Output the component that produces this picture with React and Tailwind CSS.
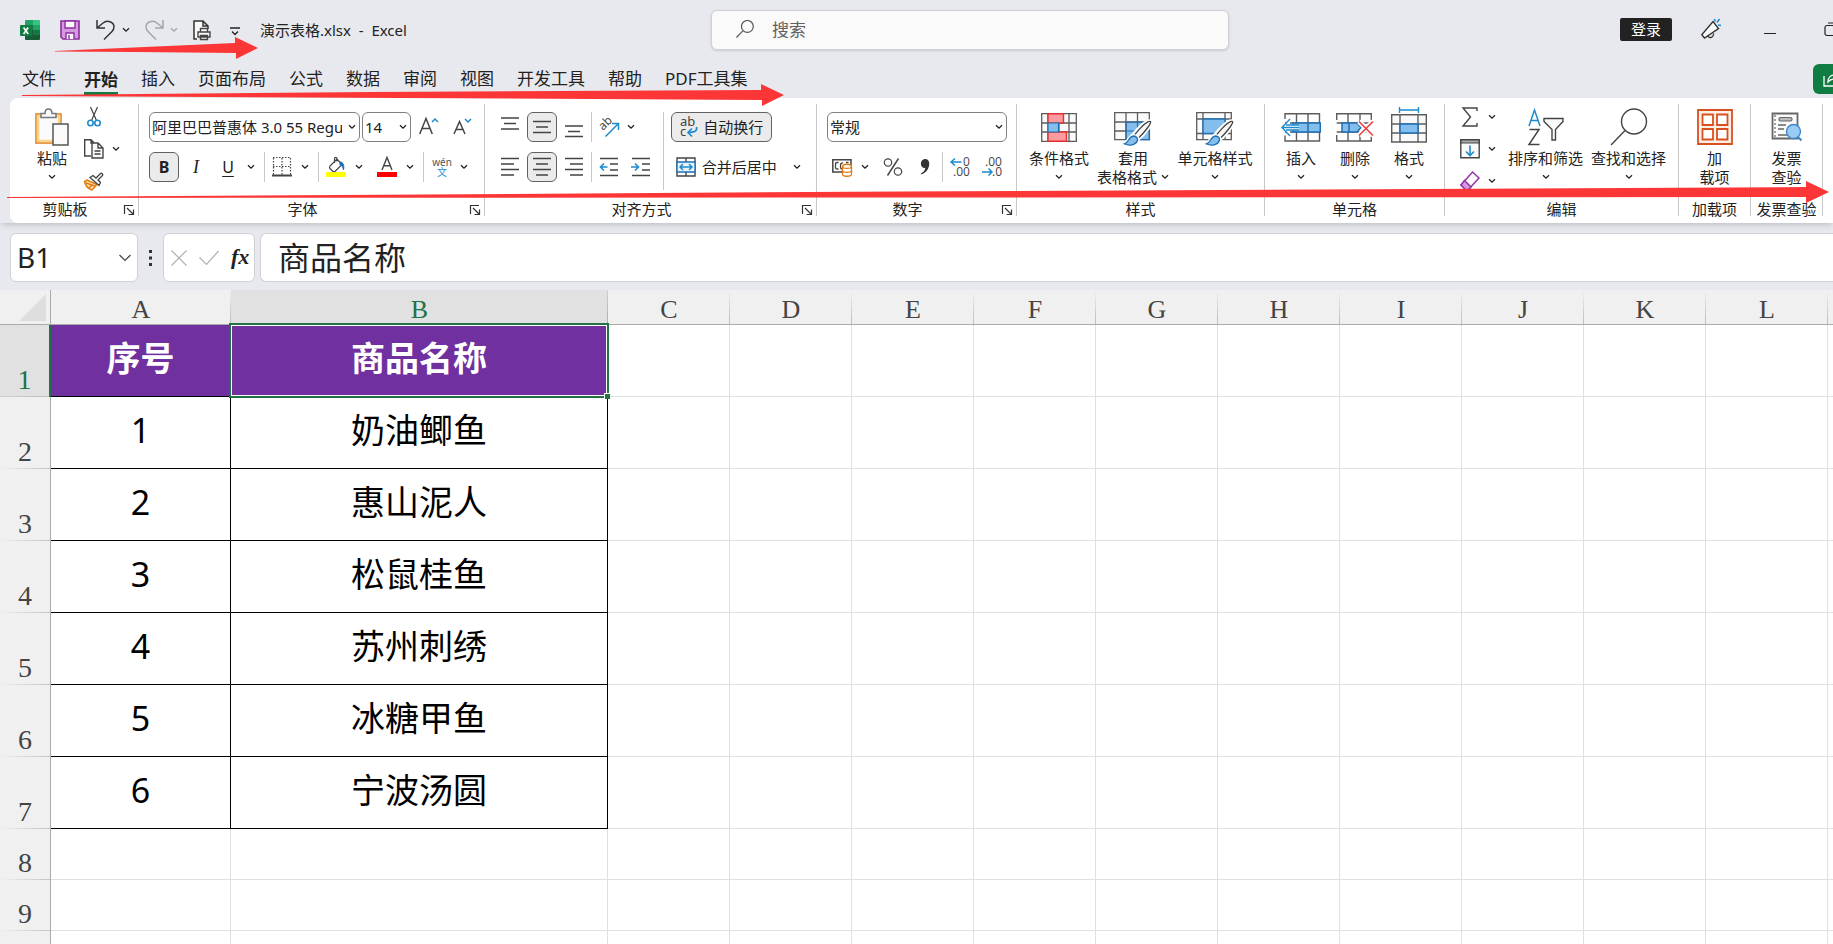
import React from 'react';
import { clsx } from 'clsx';

const tabs = ['插入', '页面布局', '公式', '数据', '审阅', '视图', '开发工具', '帮助', 'PDF工具集'];

const columns = ['C', 'D', 'E', 'F', 'G', 'H', 'I', 'J', 'K', 'L', 'M'];

const products = ['奶油鲫鱼', '惠山泥人', '松鼠桂鱼', '苏州刺绣', '冰糖甲鱼', '宁波汤圆'];

const emptyRows = [8, 9, 10];

/* ---------- icons ---------- */

const Icon = ({ w, h, children, className }) => (
  <svg
    width={w}
    height={h}
    viewBox={`0 0 ${w} ${h}`}
    fill="none"
    stroke="#444"
    strokeWidth="1.2"
    className={clsx('shrink-0 overflow-visible', className)}
    aria-hidden="true"
  >
    {children}
  </svg>
);

const ChevronIcon = ({ color = '#222' }) => (
  <Icon w={8} h={6}>
    <path d="M1 1.2l3 3 3-3" stroke={color} strokeWidth="1.3" />
  </Icon>
);

const ExcelLogo = () => (
  <Icon w={20} h={20}>
    <g stroke="none">
      <path d="M6 0h7v5H5V1a1 1 0 0 1 1-1z" fill="#21a366" />
      <path d="M13 0h6a1 1 0 0 1 1 1v4h-7z" fill="#33c481" />
      <path d="M5 5h8v5H5z" fill="#107c41" />
      <path d="M13 5h7v5h-7z" fill="#21a366" />
      <path d="M5 10h8v5H5z" fill="#185c37" />
      <path d="M13 10h7v5h-7z" fill="#107c41" />
      <path d="M5 15h15v4a1 1 0 0 1-1 1H6a1 1 0 0 1-1-1z" fill="#185c37" />
      <rect x="0" y="5" width="12" height="11" rx="1" fill="#107c41" />
    </g>
    <path d="M3.6 7.5l4.6 6.4M8.2 7.5l-4.6 6.4" stroke="#fff" strokeWidth="1.7" />
  </Icon>
);

const SaveIcon = () => (
  <Icon w={20} h={20}>
    <path d="M1 1h18v18H3l-2-2z" fill="#d59be0" stroke="#8e2b9e" strokeWidth="1.6" />
    <path d="M5 1h10v7H5z" fill="#fafafa" stroke="#8e2b9e" strokeWidth="1.4" />
    <path d="M6 19v-6h8v6" fill="#fafafa" stroke="#8e2b9e" strokeWidth="1.4" />
    <path d="M9 15v4" stroke="#8e2b9e" strokeWidth="1.4" />
  </Icon>
);

const UndoIcon = () => (
  <Icon w={20} h={20}>
    <path d="M1 0v8h8M1 8l6-5c4-3.5 11-1 11 4 0 3-1.500 4-3 5.500L8 19.500" stroke="#333" strokeWidth="1.5" />
  </Icon>
);

const RedoIcon = () => (
  <Icon w={20} h={20}>
    <path d="M19 0v8h-8M19 8l-6-5C9 -.5 2 2 2 7c0 3 1.500 4 3 5.500l7 7" stroke="#a3a5a9" strokeWidth="1.5" />
  </Icon>
);

const PrintPreviewIcon = () => (
  <Icon w={20} h={20}>
    <path d="M5 19H2V1h9l5 5v3M11 1v5h5" fill="#fafafa" stroke="#333" strokeWidth="1.5" />
    <path d="M6 12h12v5H6zM8.500 12V8.500h7V12M8.500 15.500h7v4h-7z" fill="#fafafa" stroke="#444" strokeWidth="1.4" />
  </Icon>
);

const PasteIcon = () => (
  <Icon w={34} h={38}>
    <path d="M1 6h25v29H1z" fill="#fafafa" stroke="#e07b10" strokeWidth="1.5" />
    <path d="M3 8h21v25H3z" stroke="#fbd38b" strokeWidth="2.5" />
    <path d="M6 9.500V5.500h4C10 -.5 17 -.5 17 5.500h4v4z" fill="#fafafa" stroke="#777" strokeWidth="1.5" />
    <path d="M18 16h15v21H18z" fill="#fafafa" stroke="#555" strokeWidth="1.5" />
  </Icon>
);

const CutIcon = () => (
  <Icon w={20} h={20}>
    <path d="M6.500 0l6 13.500M13.500 0l-6 13.500" />
    <circle cx="6.500" cy="16" r="2.700" stroke="#1e8bcd" strokeWidth="1.600" />
    <circle cx="13.500" cy="16" r="2.700" stroke="#1e8bcd" strokeWidth="1.600" />
  </Icon>
);

const CopyIcon = () => (
  <Icon w={20} h={20}>
    <path d="M7 17H.7V.7H7l3 3M7 1v3h3" strokeWidth="1.400" />
    <path d="M8 4h6l5 5v10H8zM14 4v5h5M10.500 12h6M10.500 15h6" fill="#fafafa" strokeWidth="1.400" />
  </Icon>
);

const PainterIcon = () => (
  <Icon w={20} h={20}>
    <path d="M3 9l-2.500 1.500c1 4 4 7.500 7.500 8.500l5-5.500z" fill="#fde2b0" stroke="#e07b10" strokeWidth="1.500" />
    <path d="M2 12l9 3M5 17l3-3" stroke="#e07b10" strokeWidth="1.500" />
    <path d="M6 6.500l9 8 1.500-3-2.500-2.500 4.500-4.500c1-1-1-3-2-2L12 7 9 4.500z" fill="#fafafa" stroke="#444" strokeWidth="1.300" />
  </Icon>
);

const LauncherIcon = () => (
  <Icon w={10} h={10}>
    <path d="M.5 9V.5H9M3 3l6 6M9.500 4.500v5h-5" stroke="#333" strokeWidth="1.200" />
  </Icon>
);

const BordersIcon = () => (
  <Icon w={20} h={20}>
    <path d="M1 .5h18M1 9.500h18M1.500 1v17M10 1v17M18.500 1v17" strokeDasharray="1.500 1.500" />
    <path d="M0 18.500h20" strokeWidth="2" />
  </Icon>
);

const FillIcon = () => (
  <Icon w={20} h={20}>
    <path d="M4 9l7-7 5 5.500-6.500 6.500c-1 1-2 1-3 0L4 11.500c-.8-.8-.8-1.500 0-2.500zM11 4.500V1.500c0-1.500-2.500-1.500-2.500 0V6" />
    <path d="M14 5c3 0 4.500 3 3.500 8-.5-3-1.500-4.500-3.500-5z" fill="#1e6fb5" stroke="#1e6fb5" strokeWidth="1" />
    <path d="M0 15h20v5H0z" fill="#ffff00" stroke="none" />
  </Icon>
);

const FontColorIcon = () => (
  <Icon w={20} h={20}>
    <path d="M5 13l5-12.500L15 13M6.500 8.800h7" strokeWidth="1.400" />
    <path d="M0 15h20v5H0z" fill="#ff0000" stroke="none" />
  </Icon>
);

const LinesIcon = ({ d, w = 18 }) => (
  <Icon w={w} h={20}>
    <path d={d} stroke="#444" strokeWidth="1.300" />
  </Icon>
);

const OrientationIcon = () => (
  <Icon w={20} h={20}>
    <text
      x="0"
      y="0"
      transform="translate(4 14) rotate(-45)"
      stroke="none"
      fill="#444"
      fontSize="12"
      fontFamily="Noto Sans, sans-serif"
    >
      ab
    </text>
    <path d="M6.500 19.500L19 7M13 6.500h6.500V13" stroke="#1e8bcd" strokeWidth="1.500" />
  </Icon>
);

const IndentIcon = ({ flip }) => (
  <Icon w={20} h={20}>
    <path d="M1 1.500h18M11 7h8M11 13h8M1 18.500h18" strokeWidth="1.300" />
    <path d={flip ? 'M0 10h7.500M4 6.500l3.500 3.500L4 13.500' : 'M8.500 10H1.500M5 6.500L1.500 10 5 13.500'} stroke="#1e8bcd" strokeWidth="1.600" />
  </Icon>
);

const WrapIcon = () => (
  <Icon w={20} h={20}>
    <g stroke="none" fill="#444" fontSize="13" fontFamily="Noto Sans, sans-serif">
      <text x="1" y="9">ab</text>
      <text x="1" y="19">c</text>
    </g>
    <path d="M17.500 10c1 4-2 5.500-8 5.500M13 11.500l-4 4 4 4" stroke="#1e8bcd" strokeWidth="1.700" />
  </Icon>
);

const MergeIcon = () => (
  <Icon w={20} h={20}>
    <path d="M1 1h18v18H1zM10 1v4M10 15v4" strokeWidth="1.400" />
    <path d="M1 5h18v10H1z" fill="#eaf4fc" stroke="#1e6fb5" strokeWidth="1.400" />
    <path d="M4 10h12M7 7l-3 3 3 3M13 7l3 3-3 3" stroke="#1e8bcd" strokeWidth="1.500" />
  </Icon>
);

const CurrencyIcon = () => (
  <Icon w={20} h={20}>
    <path d="M.8 2.800H19V15H.8z" strokeWidth="1.500" />
    <path d="M6.500 5.500H5a1.500 1.500 0 0 0-1.500 1.500v3.500A1.500 1.500 0 0 0 5 12h1.500M11 6a2 2 0 0 0-2.500 2v2c0 1 .5 2 1.500 2M14 5.500h2.500" strokeWidth="1.300" />
    <path d="M10.500 9.500c0-3 9-3 9 0v7.500c0 3-9 3-9 0z" fill="#fff" stroke="#e07b10" strokeWidth="1.300" />
    <path d="M10.500 9.500c0 2.500 9 2.500 9 0M10.500 13.500c0 2.500 9 2.500 9 0" stroke="#e07b10" strokeWidth="1.300" />
  </Icon>
);

const DecimalIcon = ({ decrease }) => (
  <Icon w={20} h={20}>
    <g stroke="none" fill="#444" fontSize="12" fontFamily="Open Sans, sans-serif">
      <text x={decrease ? 3 : 13} y="9">{decrease ? '.00' : '0'}</text>
      <text x={decrease ? 10 : 3} y="19">{decrease ? '.0' : '.00'}</text>
    </g>
    <path
      d={decrease ? 'M0 15h10M6.500 11.500l3.500 3.500L6.500 18.500' : 'M11.500 5H1M5 1.500L1 5l4 3.500'}
      stroke="#1e8bcd"
      strokeWidth="1.500"
    />
  </Icon>
);

const ConditionalIcon = () => (
  <Icon w={36} h={29}>
    <path d="M.7.700h34.600v27.600H.7zM.7 10h34.600M.7 19h34.600M7 0v28M28 0v28M18 0v28" fill="#fafafa" stroke="#5c5c5c" strokeWidth="1.300" />
    <path d="M7 .7h15.500V10H7zM7 19h18.500v9.300H7z" fill="#ff9a9e" stroke="#e03030" strokeWidth="1.400" />
    <path d="M7 10h10.500v9H7z" fill="#83beec" stroke="#1e6fb5" strokeWidth="1.200" />
  </Icon>
);

const BrushShape = () => (
  <>
    <path d="M36.500 9.500c2 1-5 11-13 18l-5-3.500C25 16 33 8 36.500 9.500z" fill="#fff" stroke="#fff" strokeWidth="4" />
    <path d="M36.500 9.500c1.500 1-5 10-12.500 17L20 23.500C26 16 34 8 36.500 9.500z" fill="#fafafa" stroke="#444" strokeWidth="1.300" />
    <path d="M19.500 24c3 .5 4.500 2 4 4-1.500 5.500-8.500 6-13 4 4-1 4-7.500 9-8z" fill="#83beec" stroke="#fff" strokeWidth="4" />
    <path d="M19.500 24c3 .5 4.500 2 4 4-1.500 5.500-8.500 6-13 4 4-1 4-7.500 9-8z" fill="#83beec" stroke="#1e6fb5" strokeWidth="1.300" />
  </>
);

const TableFormatIcon = () => (
  <Icon w={38} h={35} className="mt-1">
    <path d="M.7.700h34.600v27H.7z" fill="#fafafa" stroke="none" />
    <path d="M12 10h23.500v18H12z" fill="#83beec" stroke="none" />
    <path d="M.7.700h34.600v27H.7zM.7 10h34.600M.7 19H12M12 0v10M23.500 0v10M12 10v18" stroke="#5c5c5c" strokeWidth="1.300" />
    <path d="M12 10h23.500v17.700H12zM12 19h23.500M23.500 10v18" stroke="#1e6fb5" strokeWidth="1.200" />
    <BrushShape />
  </Icon>
);

const CellStyleIcon = () => (
  <Icon w={38} h={35} className="mt-1">
    <path d="M.7.700h34.600v27H.7zM7 0v28M.7 7h34.600M29 0v28M.7 21.500h34.600" fill="#fafafa" stroke="#5c5c5c" strokeWidth="1.300" />
    <path d="M7 7h22v14.500H7z" fill="#83beec" stroke="#1e6fb5" strokeWidth="1.400" />
    <BrushShape />
  </Icon>
);

const InsertCellsIcon = () => (
  <Icon w={40} h={29}>
    <path d="M4 6V.7h34.500V28H4v-5.500M15.500 .7V28M27 .7V28M4 10h34.500M4 19h34.500" stroke="#5c5c5c" strokeWidth="1.400" />
    <path d="M12 10h27.300v9H12z" fill="#83beec" stroke="#1e6fb5" strokeWidth="1.500" />
    <path d="M27 10v9" stroke="#1e6fb5" strokeWidth="1.500" />
    <path d="M9 6L1 14.500 9 23v-6h9v-5H9z" fill="#fff" stroke="none" />
    <path d="M9 6L1 14.500 9 23M1 14.500h17M5 12h13M5 17h13" stroke="#1e8bcd" strokeWidth="1.400" />
  </Icon>
);

const DeleteCellsIcon = () => (
  <Icon w={38} h={29}>
    <path d="M.7 7V.7h34.600V7M.7 10h34M.7 19h34M.7 22v6h34.600v-5M12 .7V10M24 .7V9M12 19v9M24 21v7" stroke="#5c5c5c" strokeWidth="1.400" />
    <path d="M6 10h15l4 4.500-4 4.500H6z" fill="#83beec" stroke="#1e6fb5" strokeWidth="1.500" />
    <path d="M13 10v9" stroke="#1e6fb5" strokeWidth="1.500" />
    <path d="M23 8.500l14 14M37 8.500l-14 14" stroke="#fff" strokeWidth="5" />
    <path d="M23 8.500l14 14M37 8.500l-14 14" stroke="#e8403f" strokeWidth="1.600" />
  </Icon>
);

const FormatCellsIcon = () => (
  <Icon w={36} h={36} className="-mt-1">
    <path d="M.7 7.700h34.600V35H.7zM.7 17h34.600M.7 26h34.600M9 7.700V35M27 7.700V35" fill="#fafafa" stroke="#5c5c5c" strokeWidth="1.400" />
    <path d="M9 17h18v9H9z" fill="#83beec" stroke="#1e6fb5" strokeWidth="1.500" />
    <path d="M8.500 3h19M8.500 0v6M27.500 0v6" stroke="#1e8bcd" strokeWidth="1.400" />
  </Icon>
);

const SigmaIcon = () => (
  <Icon w={20} h={20}>
    <path d="M17 4V1H3l7.500 9L3 19h14v-3" strokeWidth="1.400" />
  </Icon>
);

const FillDownIcon = () => (
  <Icon w={20} h={20}>
    <path d="M.8.800h18.400v18H.8z" fill="#fafafa" strokeWidth="1.400" />
    <path d="M1 1h18v3H1z" fill="#aaa" strokeWidth="1.200" />
    <path d="M10 6.500v10M6 12.500l4 4 4-4" stroke="#1e8bcd" strokeWidth="1.600" />
  </Icon>
);

const EraserIcon = () => (
  <Icon w={20} h={20}>
    <path d="M12.500 1l6.500 6L8 19H6l-5-5z" fill="#fafafa" stroke="#9436a8" strokeWidth="1.500" />
    <path d="M4.500 9.500L11 16l-3 3H6l-5-5z" fill="#d59be0" stroke="#9436a8" strokeWidth="1.500" />
  </Icon>
);

const SortFilterIcon = () => (
  <Icon w={36} h={36}>
    <path d="M1 17L6.500 1 12 17M3 11.500h7" stroke="#1e8bcd" strokeWidth="1.500" />
    <path d="M1.500 20.500h9.500L1 35.500h10.500" strokeWidth="1.500" />
    <path d="M16 9.500h19v3l-7.500 8V31H24v-10.500l-8-8z" fill="#fafafa" strokeWidth="1.400" />
  </Icon>
);

const FindIcon = ({ size = 38, stroke = '#444' }) => (
  <svg width={size} height={size} viewBox="0 0 38 38" fill="none" stroke={stroke} strokeWidth={size > 20 ? 1.4 : 2.6} aria-hidden="true">
    <circle cx="24" cy="13.500" r="12.500" />
    <path d="M15 22.500L1 37" />
  </svg>
);

const AddinsIcon = () => (
  <Icon w={36} h={36}>
    <path d="M1 1h34v34H1z" fill="#fdeee8" stroke="#d8501e" strokeWidth="1.800" />
    <path d="M5.500 5.500h10.500v10.500H5.500zM20 5.500h10.500v10.500H20zM5.500 20h10.500v10.500H5.500zM20 20h10.500v10.500H20z" fill="#fff" stroke="#d8501e" strokeWidth="1.800" />
  </Icon>
);

const InvoiceIcon = () => (
  <Icon w={32} h={30}>
    <path d="M1.500 1.500h25v25h-25z" fill="#fafafa" stroke="#666" strokeWidth="1.800" />
    <path d="M4 3v22" stroke="#666" strokeWidth="1.200" strokeDasharray="2 2" />
    <rect x="8" y="5.500" width="13" height="3.500" rx="1.500" fill="#bbb" stroke="#666" />
    <path d="M7 13h8M7 17h6M7 23h10" stroke="#666" strokeWidth="1.500" />
    <path d="M26 24l4.500 4.500" stroke="#3f86c9" strokeWidth="2.200" />
    <circle cx="22.500" cy="19.500" r="7" fill="#9acbf7" stroke="#3f86c9" strokeWidth="1.400" />
  </Icon>
);

const MegaphoneIcon = () => (
  <Icon w={20} h={20}>
    <path d="M12 2.500l5.500 7L3.500 19 .8 15.800z" fill="#fafafa" stroke="#333" strokeWidth="1.400" />
    <path d="M7 17c1 2.500 5 2 5.500-1.500v-1" stroke="#333" strokeWidth="1.300" />
    <path d="M13.500 0l.8 2.500M18.500 0l-2.500 3.500M17 6l3 .5" stroke="#1e8bcd" strokeWidth="1.500" />
  </Icon>
);

const RestoreIcon = () => (
  <Icon w={14} h={14}>
    <rect x="1" y="3.500" width="9.500" height="10" rx="2" stroke="#222" />
    <path d="M4 1h6a3 3 0 0 1 3 3v6" stroke="#222" />
  </Icon>
);

const ShareIcon = () => (
  <Icon w={18} h={16}>
    <path d="M1 5v10h15v-4M5 11c0-5 3-7 7-7V1l5 5-5 5V8c-3 0-5 .5-7 3z" stroke="#fff" strokeWidth="1.300" />
  </Icon>
);

/* ---------- ribbon pieces ---------- */

const Chevron = ({ label = '更多选项', className = 'w-6', color }) => (
  <button type="button" aria-label={label} className={clsx('flex h-full shrink-0 items-center justify-center', className)}>
    <ChevronIcon color={color} />
  </button>
);

const Tool = ({ label, active, className = 'w-5', children }) => (
  <button
    type="button"
    aria-label={label}
    className={clsx(
      'flex h-[30px] shrink-0 items-center justify-center',
      active && 'rounded-md border border-[#616161] bg-[#ebebeb]',
      className
    )}
  >
    {children}
  </button>
);

const Divider = ({ className = 'h-28' }) => <div className={clsx('w-px shrink-0 bg-[#c8c8c8]', className)} />;

const Group = ({ title, launcher, className, children }) => (
  <>
    <section className={clsx('flex shrink-0 flex-col', className)}>
      <div className="flex h-24 items-start">{children}</div>
      <div className="flex h-[18px] items-center leading-[18px]">
        <h2 className="flex-1 text-center whitespace-nowrap">{title}</h2>
        {launcher && (
          <button type="button" aria-label={`${title}设置`} className="flex w-[18px] pt-0.5 pl-1">
            <LauncherIcon />
          </button>
        )}
      </div>
    </section>
    <Divider />
  </>
);

const BigButton = ({ icon, lines, chevron = true, className }) => (
  <button type="button" className={clsx('mt-1 flex shrink-0 flex-col items-center leading-[18px] whitespace-nowrap', className)}>
    <span className="mb-[3px] flex h-[38px] items-center">{icon}</span>
    <span>{lines[0]}</span>
    <span className="flex h-[19px] items-center gap-1">
      {lines[1]}
      {chevron && <ChevronIcon />}
    </span>
  </button>
);

const SmallStack = ({ items, className }) => (
  <div className={clsx('flex flex-col gap-1.5', className)}>
    {items.map((item) => (
      <div key={item.label} className="flex h-[26px] items-center">
        <button type="button" aria-label={item.label} className="w-5">{item.icon}</button>
        {item.menu && <Chevron label={`${item.label}选项`} />}
      </div>
    ))}
  </div>
);

const Combo = ({ label, value, className }) => (
  <label className={clsx('flex h-[30px] shrink-0 items-center gap-1.5 rounded-md border border-[#808080] bg-white pr-[3px] pl-0.5', className)}>
    <select aria-label={label} className="min-w-0 flex-1 appearance-none overflow-hidden bg-transparent text-[15px] text-clip outline-none">
      <option>{value}</option>
    </select>
    <ChevronIcon />
  </label>
);

const TitleBar = () => (
  <header className="flex h-15 items-center overflow-hidden">
    <div className="flex w-[711px] shrink-0 items-center pl-5">
      <ExcelLogo />
      <div className="flex h-5 items-center pl-5">
        <button type="button" aria-label="保存" className="mr-4"><SaveIcon /></button>
        <button type="button" aria-label="撤消"><UndoIcon /></button>
        <Chevron className="mr-2 w-5" label="撤消选项" />
        <button type="button" aria-label="恢复"><RedoIcon /></button>
        <Chevron className="mr-2 w-5" label="恢复选项" color="#a3a5a9" />
        <button type="button" aria-label="打印预览"><PrintPreviewIcon /></button>
        <button type="button" aria-label="自定义快速访问工具栏" className="mr-5 ml-4.5 pt-0.5">
          <Icon w={10} h={9}>
            <path d="M0 1h10M2 4.500l3 3 3-3" stroke="#222" strokeWidth="1.300" />
          </Icon>
        </button>
      </div>
      <h1 className="whitespace-pre">演示表格.xlsx  -  Excel</h1>
    </div>
    <label className="flex h-10 w-[518px] shrink-0 items-center gap-[18px] rounded-md border border-[#cfd0d4] bg-[#fafafa] pb-0.5 pl-6 shadow-sm">
      <FindIcon size={18} stroke="#5a5a5a" />
      <input type="search" placeholder="搜索" className="h-full flex-1 bg-transparent text-[17px] outline-none placeholder:text-[#616161]" />
    </label>
    <div className="ml-auto -mr-[5px] flex shrink-0 items-center pb-0.5">
      <button type="button" className="mr-[29px] h-[23px] w-[52px] rounded-xs bg-[#222] leading-[23px] text-white">登录</button>
      <button type="button" aria-label="新增功能" className="mr-[43px]"><MegaphoneIcon /></button>
      <button type="button" aria-label="最小化" className="mr-12 h-5 w-3 pt-[9px]">
        <span className="block h-px bg-[#222]" />
      </button>
      <button type="button" aria-label="还原"><RestoreIcon /></button>
    </div>
  </header>
);

const TabBar = () => (
  <nav className="flex h-[38px] items-center overflow-hidden pl-[22px] text-[17px] leading-6">
    <a href="#file" className="mr-7">文件</a>
    <a href="#home" className="mt-1 mr-[23px] border-b-3 border-[#107c41] font-bold">开始</a>
    <div className="flex gap-[23px]">
      {tabs.map((tab) => (
        <a key={tab} href={`#${tab}`} className="whitespace-nowrap">{tab}</a>
      ))}
    </div>
    <button type="button" aria-label="共享" className="ml-auto flex h-[30px] w-5 items-center overflow-hidden rounded-l-md bg-[#107c41] pl-2.5">
      <ShareIcon />
    </button>
  </nav>
);

const ClipboardGroup = () => (
  <Group title="剪贴板" launcher className="w-32">
    <BigButton icon={<PasteIcon />} lines={['粘贴']} className="ml-[17px] w-[50px]" />
    <SmallStack
      className="ml-[7px]"
      items={[
        { label: '剪切', icon: <CutIcon /> },
        { label: '复制', icon: <CopyIcon />, menu: true },
        { label: '格式刷', icon: <PainterIcon /> },
      ]}
    />
  </Group>
);

const FontGroup = () => (
  <Group title="字体" launcher className="w-[345px]">
    <div className="flex flex-col gap-2.5 pt-2 pl-2.5">
      <div className="flex items-center">
        <Combo label="字体" value="阿里巴巴普惠体 3.0 55 Regular" className="mr-0.5 w-[211px]" />
        <Combo label="字号" value="14" className="mr-2 w-[49px]" />
        <Tool label="增大字号" className="mr-3.5 w-5">
          <Icon w={20} h={20}>
            <path d="M.7 17L7 1.500 13.300 17M3 11.500h8" strokeWidth="1.500" />
            <path d="M13 5l3-3 3 3" stroke="#1e8bcd" strokeWidth="1.500" />
          </Icon>
        </Tool>
        <Tool label="减小字号">
          <Icon w={20} h={20}>
            <path d="M1 17L6.500 4.500 12 17M3 12.500h7" strokeWidth="1.500" />
            <path d="M12 2l3 3 3-3" stroke="#1e8bcd" strokeWidth="1.500" />
          </Icon>
        </Tool>
      </div>
      <div className="flex h-[30px] items-center">
        <Tool label="加粗" active className="w-[30px] text-base font-bold">B</Tool>
        <Tool label="倾斜" className="w-[34px] font-['Liberation_Serif',serif] text-lg italic">I</Tool>
        <Tool label="下划线" className="w-[30px] text-base underline underline-offset-3">U</Tool>
        <Chevron className="w-4" />
        <Divider className="ml-[5px] h-[30px]" />
        <Tool label="边框" className="w-[34px]"><BordersIcon /></Tool>
        <Chevron className="w-3" />
        <Divider className="mx-[7px] h-[30px]" />
        <Tool label="填充颜色"><FillIcon /></Tool>
        <Chevron className="w-[26px]" />
        <Tool label="字体颜色" className="w-[30px]"><FontColorIcon /></Tool>
        <Chevron className="w-4" />
        <Divider className="mr-2 ml-[5px] h-[30px]" />
        <Tool label="拼音指南" className="w-5 flex-col text-[10px] leading-[10px] text-[#555]">
          <span>wén</span>
          <span className="text-[#1e8bcd]">文</span>
        </Tool>
        <Chevron />
      </div>
    </div>
  </Group>
);

const AlignGroup = () => (
  <Group title="对齐方式" launcher className="w-[331px]">
    <div className="flex items-start gap-[7px] pt-2 pl-4">
      <div className="grid grid-cols-[18px_30px_18px_1px] gap-x-2 gap-y-2.5">
        <Tool label="顶端对齐" className="w-[18px]"><LinesIcon d="M0 1h18M3 6.500h12M0 12h18" /></Tool>
        <Tool label="垂直居中" active className="w-[30px]"><LinesIcon d="M0 4.500h18M3 10h12M0 15.500h18" /></Tool>
        <Tool label="底端对齐" className="w-[18px]"><LinesIcon d="M0 9h18M3 14.500h12M0 19.500h18" /></Tool>
        <Divider className="h-[30px]" />
        <Tool label="左对齐" className="w-[18px]"><LinesIcon d="M0 1.500h18M0 7h13M0 12.500h18M0 18h13" /></Tool>
        <Tool label="居中" active className="w-[30px]"><LinesIcon d="M0 1.500h18M3 7h12M0 12.500h18M3 18h12" /></Tool>
        <Tool label="右对齐" className="w-[18px]"><LinesIcon d="M0 1.500h18M5 7h13M0 12.500h18M5 18h13" /></Tool>
        <Divider className="h-[30px]" />
      </div>
      <div className="flex w-[57px] flex-col gap-2.5">
        <div className="flex h-[30px] items-center">
          <Tool label="方向"><OrientationIcon /></Tool>
          <Chevron />
        </div>
        <div className="flex gap-3">
          <Tool label="减少缩进量"><IndentIcon /></Tool>
          <Tool label="增加缩进量"><IndentIcon flip /></Tool>
        </div>
      </div>
      <Divider className="h-[78px]" />
      <div className="flex flex-col items-start gap-2.5">
        <Tool active className="w-[101px] gap-1"><WrapIcon />自动换行</Tool>
        <div className="flex h-[30px] items-center">
          <Tool className="gap-1.5 pl-[5px]"><MergeIcon />合并后居中</Tool>
          <Chevron className="w-10" />
        </div>
      </div>
    </div>
  </Group>
);

const NumberGroup = () => (
  <Group title="数字" launcher className="w-[199px]">
    <div className="flex flex-col gap-2.5 pt-2 pl-2.5">
      <Combo label="数字格式" value="常规" className="w-[180px]" />
      <div className="flex h-[30px] items-center pl-[5px]">
        <Tool label="会计数字格式"><CurrencyIcon /></Tool>
        <Chevron className="w-[26px]" />
        <Tool label="百分比样式" className="w-[30px]">
          <Icon w={20} h={20}>
            <circle cx="5" cy="5.500" r="3.700" />
            <circle cx="15" cy="14.500" r="3.700" />
            <path d="M15.500 1.500L4.500 18.500" strokeWidth="1.400" />
          </Icon>
        </Tool>
        <Tool label="千位分隔样式" className="w-[34px]">
          <Icon w={10} h={18}>
            <path d="M5 1c3 0 5 2.500 4 7-.8 4-3.500 7-7.500 8.500L1 15.500c2.500-1.500 4-3 4.200-5.500C-.5 10.500-.5 1 5 1z" fill="#333" stroke="none" />
          </Icon>
        </Tool>
        <Divider className="mr-[7px] h-[30px]" />
        <Tool label="增加小数位数" className="mr-3 w-5"><DecimalIcon /></Tool>
        <Tool label="减少小数位数"><DecimalIcon decrease /></Tool>
      </div>
    </div>
  </Group>
);

const Ribbon = () => (
  <div className="ml-2.5 flex h-[125px] items-start overflow-hidden rounded-l-lg bg-white pt-1.5 text-[15px]">
    <ClipboardGroup />
    <FontGroup />
    <AlignGroup />
    <NumberGroup />
    <Group title="样式" className="w-[247px]">
      <BigButton icon={<ConditionalIcon />} lines={['条件格式']} className="ml-[7px] w-[70px]" />
      <BigButton icon={<TableFormatIcon />} lines={['套用', '表格格式']} className="w-[78px]" />
      <BigButton icon={<CellStyleIcon />} lines={['单元格样式']} className="w-[86px]" />
    </Group>
    <Group title="单元格" className="w-[179px]">
      <BigButton icon={<InsertCellsIcon />} lines={['插入']} className="ml-[9px] w-[54px]" />
      <BigButton icon={<DeleteCellsIcon />} lines={['删除']} className="w-[54px]" />
      <BigButton icon={<FormatCellsIcon />} lines={['格式']} className="w-[54px]" />
    </Group>
    <Group title="编辑" className="w-[233px]">
      <SmallStack
        className="ml-[15px]"
        items={[
          { label: '求和', icon: <SigmaIcon />, menu: true },
          { label: '填充', icon: <FillDownIcon />, menu: true },
          { label: '清除', icon: <EraserIcon />, menu: true },
        ]}
      />
      <BigButton icon={<SortFilterIcon />} lines={['排序和筛选']} className="w-[83px]" />
      <BigButton icon={<FindIcon />} lines={['查找和选择']} className="w-[83px]" />
    </Group>
    <Group title="加载项" className="w-[71px]">
      <BigButton icon={<AddinsIcon />} lines={['加', '载项']} chevron={false} className="w-full" />
    </Group>
    <Group title="发票查验" className="w-[71px]">
      <BigButton icon={<InvoiceIcon />} lines={['发票', '查验']} chevron={false} className="w-full" />
    </Group>
  </div>
);

const FormulaBar = () => (
  <div className="flex h-[67px] items-center pt-0.5 pl-2.5">
    <div className="flex h-[49px] w-32 shrink-0 items-center rounded-md border border-[#d0d1d5] bg-white pr-1.5 pl-1.5">
      <input aria-label="名称框" defaultValue="B1" className="w-0 flex-1 pb-0.5 text-[28px] outline-none" />
      <button type="button" aria-label="名称列表">
        <Icon w={12} h={8}><path d="M.5 1l5.500 5.500L11.500 1" /></Icon>
      </button>
    </div>
    <Icon w={25} h={16}>
      <path d="M11 1.500h3M11 8h3M11 14.500h3" stroke="#333" strokeWidth="3" />
    </Icon>
    <div className="mr-[5px] flex h-[49px] w-[92px] shrink-0 items-center rounded-md border border-[#d0d1d5] bg-white pl-[7px]">
      <button type="button" aria-label="取消" className="mr-3">
        <Icon w={16} h={16}><path d="M.5.500l15 15M15.500.500l-15 15" stroke="#b0b0b0" /></Icon>
      </button>
      <button type="button" aria-label="输入" className="mr-3">
        <Icon w={20} h={16}><path d="M.5 7.500l7 7L19.500 1" stroke="#b0b0b0" /></Icon>
      </button>
      <button type="button" aria-label="插入函数" className="pb-0.5 font-['Liberation_Serif',serif] text-[22px] leading-6 font-bold italic">fx</button>
    </div>
    <input
      aria-label="编辑栏"
      defaultValue="商品名称"
      className="h-[49px] min-w-0 flex-1 rounded-l-md border border-r-0 border-[#d0d1d5] bg-white pb-1 pl-[17px] text-[32px] outline-none"
    />
  </div>
);

/* ---------- sheet ---------- */

const ColumnHead = ({ children, active }) => (
  <th
    scope="col"
    className={clsx(
      "h-[35px] border-b border-[#ababab] bg-linear-to-b bg-[length:1px_100%] bg-right bg-no-repeat pt-1.5 font-['Liberation_Serif',serif] text-[26px] leading-7 font-normal",
      active ? 'bg-[#e1e1e1] from-[#cfcfcf] to-[#ababab] text-[#217346]' : 'bg-[#f0f0f0] from-[#f0f0f0] to-[#bdbdbd] text-[#444]'
    )}
  >
    {children}
  </th>
);

const RowHead = ({ children, active }) => (
  <th
    scope="row"
    className={clsx(
      "bg-linear-to-r bg-[length:100%_1px] bg-bottom bg-no-repeat pb-px align-bottom font-['Liberation_Serif',serif] text-[28px] leading-8 font-normal",
      active
        ? 'border-r-2 border-[#217346] bg-[#e1e1e1] from-[#cfcfcf] to-[#bdbdbd] text-[#217346]'
        : 'border-r border-[#ababab] bg-[#f0f0f0] from-[#f0f0f0] to-[#c4c4c4] text-[#444]'
    )}
  >
    {children}
  </th>
);

const BlankCells = ({ names }) => names.map((name) => <td key={name} className="border-r border-b border-[#e0e0e0]" />);

const Sheet = () => (
  <main className="min-h-0 flex-1 overflow-hidden bg-white">
    <table className="w-[1950px] table-fixed border-separate border-spacing-0 text-center text-black">
      <colgroup>
        <col className="w-[51px]" />
        <col className="w-[180px]" />
        <col className="w-[377px]" />
        {columns.map((name) => <col key={name} className="w-[122px]" />)}
      </colgroup>
      <thead>
        <tr>
          <td className="h-[35px] border-r border-b border-[#ababab] bg-[#f0f0f0] pr-1">
            <svg width="27" height="27" viewBox="0 0 27 27" className="ml-auto" aria-hidden="true">
              <path d="M27 0v27H0z" fill="#dedede" />
            </svg>
          </td>
          <ColumnHead>A</ColumnHead>
          <ColumnHead active>B</ColumnHead>
          {columns.map((name) => <ColumnHead key={name}>{name}</ColumnHead>)}
        </tr>
      </thead>
      <tbody className="text-[34px] leading-[48px]">
        <tr className="h-[72px]">
          <RowHead active>1</RowHead>
          <td className="border-r border-b border-black bg-[#7030a0] pb-1.5 font-bold text-white">序号</td>
          <td className="relative border-r border-b border-black bg-[#7030a0] pb-1.5 font-bold text-white">
            商品名称
            <div className="absolute -inset-0.5 border-2 border-[#217346]">
              <div className="h-full border border-white" />
            </div>
            <div className="absolute -right-[3px] -bottom-[3px] size-1.5 border-t border-l border-white bg-[#217346]" />
          </td>
          <BlankCells names={columns} />
        </tr>
        {products.map((name, i) => (
          <tr key={name} className="h-[72px]">
            <RowHead>{i + 2}</RowHead>
            <td className="border-r border-b border-black pb-1.5">{i + 1}</td>
            <td className="border-r border-b border-black pb-1.5">{name}</td>
            <BlankCells names={columns} />
          </tr>
        ))}
        {emptyRows.map((row) => (
          <tr key={row} className="h-[51px]">
            <RowHead>{row}</RowHead>
            <BlankCells names={['A', 'B', ...columns]} />
          </tr>
        ))}
      </tbody>
    </table>
  </main>
);

/* Red pointer arrows drawn over the toolbar, the tabs and the ribbon */
const Arrows = () => (
  <svg width="1833" height="210" viewBox="0 0 1833 210" className="pointer-events-none absolute top-0 left-0 z-20" fill="#fc3636" aria-hidden="true">
    <path d="M55 51l180-8v-6l23 11-22 11v-6l-100-1-81-.5z" />
    <path d="M22 95l350-3 389-2v-6l23 11-22 11v-6L400 98 22 96z" />
    <path d="M7 197L900 191.500 1806 187v-6l23 11-23 11v-6l-906 .5L7 198z" />
  </svg>
);

const App = () => (
  <div className="relative flex h-screen flex-col overflow-hidden bg-[#e7e9ee] font-['Noto_Sans','Noto_Sans_CJK_SC',sans-serif] text-[15px] leading-5 text-[#222]">
    <TitleBar />
    <TabBar />
    <div className="shadow-md">
      <Ribbon />
    </div>
    <FormulaBar />
    <Sheet />
    <Arrows />
  </div>
);

export default App;
